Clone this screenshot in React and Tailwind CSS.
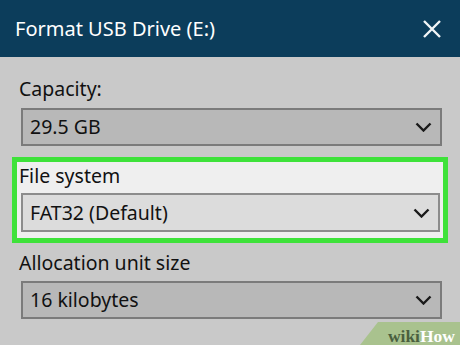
function Chevron() {
  return (
    <svg width="17" height="10" viewBox="0 0 17 10" className="shrink-0">
      <path d="M1.5 1.5 L8.5 8.5 L15.5 1.5" fill="none" stroke="#1a1a1a" strokeWidth="2.4" />
    </svg>
  );
}

function Select({ value, light }) {
  return (
    <div
      className={`flex items-center justify-between h-full border-2 pl-[7px] pr-[8px] ${
        light ? "bg-[#dcdcdc] border-[#8c8c8c]" : "bg-[#b8b8b8] border-[#7b7b7b]"
      }`}
    >
      <span className="text-[19.5px] text-[#111] leading-none">{value}</span>
      <Chevron />
    </div>
  );
}

export default function App() {
  return (
    <div
      className="relative w-[460px] h-[345px] overflow-hidden bg-[#c9c9c9]"
      style={{ fontFamily: '"Noto Sans", "Open Sans", sans-serif' }}
    >
      <div className="h-[57px] bg-[#0c3d5b] flex items-center justify-between pl-[15px] pr-[18px]">
        <span className="text-white text-[20px] leading-none">Format USB Drive (E:)</span>
        <svg width="20" height="18" viewBox="0 0 20 18">
          <path d="M2 1 L18 17 M18 1 L2 17" stroke="#f2f5f7" strokeWidth="2.4" fill="none" />
        </svg>
      </div>

      <div className="px-[12px] pt-[18px]">
        <div className="pl-[7px] h-[28px] flex items-center text-[19.5px] text-[#111]">Capacity:</div>
        <div className="mt-[5px] ml-[9px] mr-[6px] h-[38px]">
          <Select value="29.5 GB" />
        </div>

        <div className="mt-[11px] border-[5px] border-[#3ee23a] bg-[#efefef] pb-[6px]">
          <div className="pl-[2px] h-[27px] flex items-center text-[19.5px] text-[#111]">File system</div>
          <div className="mt-[4px] ml-[4px] mr-[3px] h-[39px]">
            <Select value="FAT32 (Default)" light />
          </div>
        </div>

        <div className="mt-[6px] pl-[7px] h-[28px] flex items-center text-[19.5px] text-[#111]">
          Allocation unit size
        </div>
        <div className="mt-[4px] ml-[9px] mr-[6px] h-[38px]">
          <Select value="16 kilobytes" />
        </div>
      </div>

      <div
        className="absolute right-0 bottom-0 w-[100px] h-[23px] bg-[#a9c28e] flex items-center justify-end pr-[5px]"
        style={{ clipPath: "polygon(18px 0, 100% 0, 100% 100%, 0 100%)" }}
      >
        <span
          className="text-[17.5px] font-bold leading-none mt-[6px]"
          style={{ fontFamily: '"Liberation Serif", "DejaVu Serif", serif' }}
        >
          <span className="text-[#4a5f3e]">wiki</span>
          <span className="text-white">How</span>
        </span>
      </div>
    </div>
  );
}
